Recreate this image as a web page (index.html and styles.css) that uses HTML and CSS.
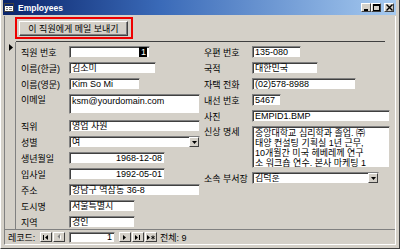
FILE: index.html
```html
<!DOCTYPE html>
<html lang="ko">
<head>
<meta charset="utf-8">
<title>Employees</title>
<link rel="stylesheet" href="styles.css">
</head>
<body>
<div class="window">
  <div class="titlebar">
    <svg class="app-icon" width="10" height="9" viewBox="0 0 10 9">
      <rect x="0.5" y="0.5" width="9" height="8" fill="#fff" stroke="#404040"/>
      <rect x="1" y="1" width="8" height="2" fill="#0a246a"/>
      <rect x="2" y="4" width="2" height="1" fill="#808080"/>
      <rect x="5" y="4" width="3" height="1" fill="#808080"/>
      <rect x="2" y="6" width="2" height="1" fill="#808080"/>
      <rect x="5" y="6" width="3" height="1" fill="#808080"/>
    </svg>
    <span class="title">Employees</span>
    <div class="caption-btns">
      <span class="cbtn"><svg width="7" height="7" viewBox="0 0 7 7"><rect x="1" y="5" width="4" height="2" fill="#000"/></svg></span>
      <span class="cbtn"><svg width="7" height="7" viewBox="0 0 7 7"><rect x="0.5" y="0.5" width="6" height="6" fill="none" stroke="#000"/><rect x="0" y="0" width="7" height="2" fill="#000"/></svg></span>
      <span class="cbtn cbtn-close"><svg width="7" height="7" viewBox="0 0 7 7"><path d="M0.5 0.5 L6.5 6.5 M6.5 0.5 L0.5 6.5" stroke="#000" stroke-width="1.4"/></svg></span>
    </div>
  </div>
  <div class="client">
    <div class="form-header">
      <div class="highlight"><button class="btn">이 직원에게 메일 보내기</button></div>
      <div class="header-rule"></div>
    </div>
    <div class="detail">
      <div class="selector">
        <svg width="4" height="7" viewBox="0 0 4 7"><path d="M0 0 L4 3.5 L0 7 Z" fill="#000"/></svg>
      </div>
      <div class="fields">
        <div class="col col-left">
          <div class="row"><span class="lbl">직원 번호</span><span class="box w81 right"><span class="sel">1</span></span></div>
          <div class="row"><span class="lbl">이름(한글)</span><span class="box w87">김소미</span></div>
          <div class="row"><span class="lbl">이름(영문)</span><span class="box w71">Kim So Mi</span></div>
          <div class="row row-tall"><span class="lbl">이메일</span><span class="box w131 tall">ksm@yourdomain.com</span></div>
          <div class="row"><span class="lbl">직위</span><span class="box w131">영업 사원</span></div>
          <div class="row"><span class="lbl">성별</span><span class="box w131 combo"><span class="combo-text">여</span><span class="dd"><svg width="5" height="3" viewBox="0 0 5 3"><path d="M0 0 H5 L2.5 3 Z" fill="#000"/></svg></span></span></div>
          <div class="row"><span class="lbl">생년월일</span><span class="box w96 right">1968-12-08</span></div>
          <div class="row"><span class="lbl">입사일</span><span class="box w96 right">1992-05-01</span></div>
          <div class="row"><span class="lbl">주소</span><span class="box w131">강남구 역삼동 36-8</span></div>
          <div class="row"><span class="lbl">도시명</span><span class="box w66">서울특별시</span></div>
          <div class="row"><span class="lbl">지역</span><span class="box w66">경인</span></div>
        </div>
        <div class="col col-right">
          <div class="row"><span class="lbl">우편 번호</span><span class="box w49">135-080</span></div>
          <div class="row"><span class="lbl">국적</span><span class="box w66">대한민국</span></div>
          <div class="row"><span class="lbl">자택 전화</span><span class="box w104">(02)578-8988</span></div>
          <div class="row"><span class="lbl">내선 번호</span><span class="box w29">5467</span></div>
          <div class="row"><span class="lbl">사진</span><span class="box w138">EMPID1.BMP</span></div>
          <div class="row row-memo"><span class="lbl">신상 명세</span><span class="box w138 memo"><span>중앙대학교 심리학과 졸업. ㈜</span><span>태양 컨설팅 기획실 1년 근무,</span><span>10개월간 미국 헤베레께 연구</span><span>소 워크숍 연수. 본사 마케팅 1</span></span></div>
          <div class="row"><span class="lbl">소속 부서장</span><span class="box w127 combo"><span class="combo-text">김덕훈</span><span class="dd"><svg width="5" height="3" viewBox="0 0 5 3"><path d="M0 0 H5 L2.5 3 Z" fill="#000"/></svg></span></span></div>
        </div>
      </div>
    </div>
    <div class="navbar">
      <span class="nav-label">레코드:</span>
      <span class="nbtn nb-first"><svg width="7" height="5" viewBox="0 0 7 5"><rect x="0" y="0" width="1" height="5" fill="#000"/><path d="M5 0 L2 2.5 L5 5 Z" fill="#000"/></svg></span>
      <span class="nbtn nb-prev"><svg width="4" height="6" viewBox="0 0 4 6"><path d="M4 1 L1.5 3.5 L4 6 Z" fill="#fff"/><path d="M3 0 L0.5 2.5 L3 5 Z" fill="#808080"/></svg></span>
      <span class="nav-box">1</span>
      <span class="nbtn nb-next"><svg width="4" height="5" viewBox="0 0 4 5"><path d="M0 0 L3 2.5 L0 5 Z" fill="#000"/></svg></span>
      <span class="nbtn nb-last"><svg width="6" height="5" viewBox="0 0 6 5"><path d="M0 0 L3 2.5 L0 5 Z" fill="#000"/><rect x="4" y="0" width="1" height="5" fill="#000"/></svg></span>
      <span class="nbtn nb-new"><svg width="8" height="5" viewBox="0 0 8 5"><path d="M0 0 L3 2.5 L0 5 Z" fill="#000"/><path d="M6 0.5 V4.5 M4.3 1.5 L7.7 3.5 M7.7 1.5 L4.3 3.5" stroke="#000" stroke-width="0.9"/></svg></span>
      <span class="nav-total">전체: 9</span>
    </div>
  </div>
</div>
</body>
</html>
```
FILE: styles.css
```css
* { box-sizing: border-box; margin: 0; padding: 0; }
html, body { width: 400px; height: 249px; overflow: hidden; }
body {
  background: #d4d0c8;
  font-family: "Liberation Sans", "Noto Sans CJK KR", sans-serif;
  font-size: 9px;
  color: #000;
}
.window {
  width: 400px;
  height: 249px;
  display: flex;
  flex-direction: column;
  background: #d4d0c8;
  padding: 0 3px 3px 2px;
  border-left: 1px solid #fff;
  border-right: 1px solid #404040;
  border-bottom: 1px solid #404040;
}
.titlebar {
  height: 15px;
  flex: none;
  display: flex;
  align-items: center;
  padding: 0 2px 0 1px;
  background: linear-gradient(90deg, #0a246a 0%, #3a6ab8 40%, #a6caf0 100%);
}
.app-icon { flex: none; }
.title {
  margin-left: 4px;
  color: #fff;
  font-weight: bold;
  font-size: 8.5px;
  font-family: "Liberation Sans", sans-serif;
}
.caption-btns { margin-left: auto; display: flex; align-items: center; }
.cbtn {
  width: 10px;
  height: 9px;
  display: flex;
  align-items: center;
  justify-content: center;
  background: #d4d0c8;
  border: 1px solid;
  border-color: #fff #404040 #404040 #fff;
}
.cbtn-close { margin-left: 3px; }
.client {
  flex: 1;
  display: flex;
  flex-direction: column;
  margin-left: 1px;
  margin-top: 1px;
  border-left: 1px solid #808080;
  border-right: 1px solid #fff;
  border-bottom: 1px solid #fff;
}
.form-header {
  flex: none;
  display: flex;
  flex-direction: column;
  padding-top: 1px;
}
.highlight {
  margin-left: 10px;
  width: 118px;
  height: 22px;
  border: 2px solid #ee0000;
  padding: 2px 3px 1px 2px;
  display: flex;
}
.btn {
  flex: 1;
  height: 15px;
  font: inherit;
  font-size: 9px;
  background: #d4d0c8;
  border: 1px solid;
  border-color: #fff #404040 #404040 #fff;
  box-shadow: inset -1px -1px #808080;
  display: flex;
  align-items: center;
  justify-content: center;
  color: #000;
}
.header-rule {
  margin: 2px 10px 0 11px;
  height: 1px;
  background: #404040;
}
.detail {
  flex: 1;
  display: flex;
  min-height: 0;
}
.selector {
  width: 11px;
  flex: none;
  border-right: 1px solid #808080;
  padding: 2px 0 0 4px;
}
.selector svg { display: block; }
.fields {
  flex: 1;
  display: flex;
  padding: 4px 0 0 5px;
}
.col { display: flex; flex-direction: column; gap: 4px; }
.col-left { width: 183px; flex: none; }
.row { display: flex; align-items: center; height: 12px; }
.row-tall { height: 20px; align-items: flex-start; margin-bottom: 2px; }
.row-tall .lbl { line-height: 12px; }
.row-memo { height: 42px; align-items: flex-start; }
.row-memo .lbl { line-height: 12px; }
.lbl { width: 48px; flex: none; white-space: nowrap; }
.box {
  height: 12px;
  flex: none;
  background: #fff;
  border: 1px solid;
  border-color: #808080 #d4d0c8 #d4d0c8 #808080;
  box-shadow: inset 1px 1px #404040;
  padding: 0 2px 0 2px;
  line-height: 10px;
  white-space: nowrap;
  overflow: hidden;
  display: flex;
  align-items: center;
}
.box.right { justify-content: flex-end; }
.box.tall { height: 20px; align-items: flex-start; padding-top: 1px; }
.box.memo {
  height: 42px;
  flex-direction: column;
  align-items: flex-start;
  padding-top: 1px;
}
.box.memo span { display: block; line-height: 10px; }
.box.combo { padding-right: 0; }
.combo-text { flex: 1; }
.dd {
  width: 10px;
  height: 10px;
  flex: none;
  background: #d4d0c8;
  border: 1px solid;
  border-color: #fff #404040 #404040 #fff;
  display: flex;
  align-items: center;
  justify-content: center;
}
.sel {
  background: #000;
  color: #fff;
  padding: 0 1px 0 2px;
  height: 10px;
  line-height: 10px;
}
.w29 { width: 29px; }
.w49 { width: 49px; }
.w66 { width: 66px; }
.w71 { width: 71px; }
.w81 { width: 81px; }
.w87 { width: 87px; }
.w96 { width: 96px; }
.w104 { width: 104px; }
.w127 { width: 127px; }
.w131 { width: 131px; }
.w138 { width: 138px; }
.navbar {
  height: 15px;
  flex: none;
  display: flex;
  align-items: center;
  border-top: 1px solid #808080;
  padding-left: 3px;
}
.nav-label { width: 32px; flex: none; }
.nbtn {
  width: 12px;
  height: 10px;
  flex: none;
  display: flex;
  align-items: center;
  justify-content: center;
  background: #d4d0c8;
  border: 1px solid;
  border-color: #fff #404040 #404040 #fff;
  margin-right: 1px;
}
.nb-prev { margin-right: 4px; }
.nav-box {
  width: 46px;
  height: 11px;
  flex: none;
  background: #fff;
  border: 1px solid;
  border-color: #808080 #d4d0c8 #d4d0c8 #808080;
  box-shadow: inset 1px 1px #404040;
  text-align: right;
  padding-right: 2px;
  line-height: 9px;
  margin-right: 4px;
}
.nb-new { margin-right: 3px; }
.nav-total { white-space: nowrap; }
```
